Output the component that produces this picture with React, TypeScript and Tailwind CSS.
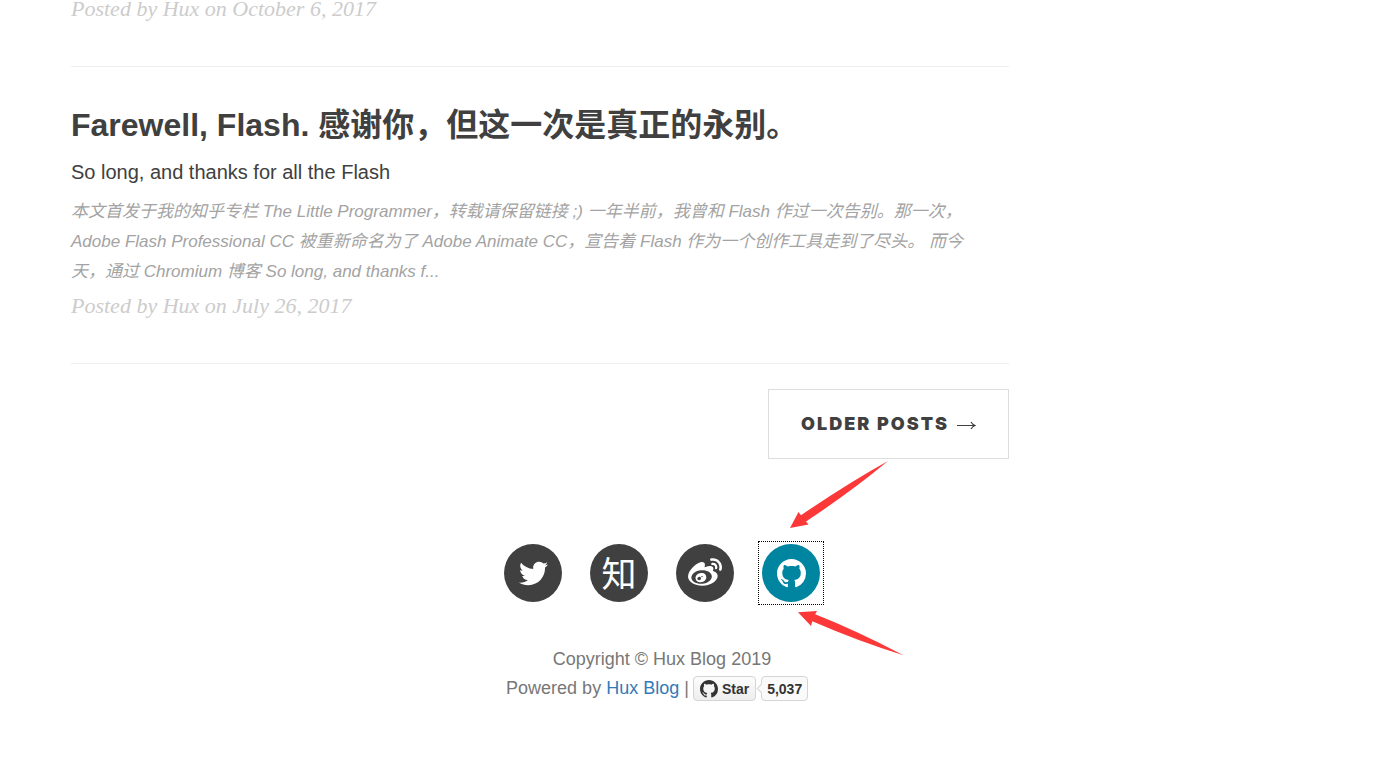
import React from "react";
import { FaTwitter, FaWeibo } from "react-icons/fa";

function GithubMark({ className }: { className: string }) {
  return (
    <svg className={className} viewBox="0 0 16 16" fill="currentColor" aria-hidden="true">
      <path d="M8 0C3.58 0 0 3.58 0 8c0 3.54 2.29 6.53 5.47 7.59.4.07.55-.17.55-.38 0-.19-.01-.82-.01-1.49-2.01.37-2.53-.49-2.69-.94-.09-.23-.48-.94-.82-1.13-.28-.15-.68-.52-.01-.53.63-.01 1.08.58 1.23.82.72 1.21 1.87.87 2.33.66.07-.52.28-.87.51-1.07-1.78-.2-3.64-.89-3.64-3.95 0-.87.31-1.59.82-2.15-.08-.2-.36-1.02.08-2.12 0 0 .67-.21 2.2.82.64-.18 1.32-.27 2-.27s1.36.09 2 .27c1.53-1.04 2.2-.82 2.2-.82.44 1.1.16 1.92.08 2.12.51.56.82 1.27.82 2.15 0 3.07-1.87 3.75-3.65 3.95.29.25.54.73.54 1.48 0 1.07-.01 1.93-.01 2.2 0 .21.15.46.55.38A8.01 8.01 0 0 0 16 8c0-4.42-3.58-8-8-8z" />
    </svg>
  );
}

function PostMeta({ children }: { children: React.ReactNode }) {
  return (
    <p className="font-['Liberation_Serif','Noto_Sans_CJK_SC',serif] text-[22px] leading-8 text-[#cccccc] italic">
      {children}
    </p>
  );
}

function SocialLink({
  label,
  active = false,
  children,
}: {
  label: string;
  active?: boolean;
  children: React.ReactNode;
}) {
  return (
    <li>
      <a
        href="#"
        aria-label={label}
        className={
          active
            ? "block border border-dotted border-black px-[3px] py-[2px]"
            : "block border border-transparent px-[3px] py-[2px]"
        }
      >
        <span
          className={
            active
              ? "flex size-[58px] items-center justify-center rounded-full bg-[#0085a1] text-white"
              : "flex size-[58px] items-center justify-center rounded-full bg-[#404040] text-white"
          }
        >
          {children}
        </span>
      </a>
    </li>
  );
}

function StarButton() {
  return (
    <span className="flex w-[125px] items-center text-sm font-bold text-[#333333]">
      <a
        href="#"
        className="flex h-[25px] items-center gap-1 rounded-[4px] border border-[#d5d5d5] bg-linear-to-b from-[#fcfcfc] to-[#eeeeee] px-[6px]"
      >
        <GithubMark className="size-[18px]" />
        Star
      </a>
      <a
        href="#"
        className="relative ml-[5px] flex h-[25px] items-center rounded-[4px] border border-[#d5d5d5] bg-[#fafafa] px-[5px]"
      >
        <span className="absolute top-[8px] -left-[4px] size-[7px] rotate-45 border-b border-l border-[#d5d5d5] bg-[#fafafa]" />
        5,037
      </a>
    </span>
  );
}

function Annotations() {
  return (
    <svg
      className="pointer-events-none absolute top-[456px] left-[784px]"
      width="124"
      height="204"
      viewBox="784 456 124 204"
      fill="#fc3838"
      aria-hidden="true"
    >
      <path d="M790 528 798.5 512 801 515.2 Q850 482 888 461 Q852 491 806 521.5 L808.5 524.5Z" />
      <path d="M798 612.3 817 611 815.2 614.3 Q855 630 903.5 655.2 Q860 642 812.3 621.3 L811 626Z" />
    </svg>
  );
}

export default function App() {
  return (
    <div className="relative overflow-x-hidden bg-white font-['Liberation_Sans','Noto_Sans_CJK_SC',sans-serif] text-[#404040]">
      <main className="-mt-[7px] ml-[71px] max-w-[938px]">
        <article className="border-b border-[#eeeeee] pb-[41px]">
          <PostMeta>Posted by Hux on October 6, 2017</PostMeta>
        </article>

        <article className="border-b border-[#eeeeee] pt-10 pb-[41px]">
          <a href="#" className="mb-[3px] block">
            <h2 className="text-[32px] leading-9 font-bold">
              Farewell, Flash. 感谢你，但这一次是真正的永别。
            </h2>
            <h3 className="mt-[18px] text-xl leading-[22px]">
              So long, and thanks for all the Flash
            </h3>
            <p className="mt-[14px] text-[17px] leading-[30px] text-[#a3a3a3] italic">
              本文首发于我的知乎专栏 The Little Programmer，转载请保留链接 ;)
              一年半前，我曾和 Flash 作过一次告别。那一次，
              <br />
              Adobe Flash Professional CC 被重新命名为了 Adobe Animate
              CC，宣告着 Flash 作为一个创作工具走到了尽头。 而今
              <br />
              天，通过 Chromium 博客 So long, and thanks f...
            </p>
          </a>
          <PostMeta>Posted by Hux on July 26, 2017</PostMeta>
        </article>

        <nav className="mt-[25px] flex justify-end">
          <a
            href="#"
            className="flex h-[70px] items-center gap-2 border border-[#dddddd] px-8 font-['Inter','Liberation_Sans',sans-serif] text-lg font-black tracking-[2px]"
          >
            OLDER POSTS
            <svg width="19" height="12" viewBox="0 0 19 12" fill="none" stroke="currentColor" strokeWidth="1.2" aria-hidden="true">
              <path d="M0 7.500H18M14 4Q15.500 6.500 18 7.500Q15.500 8.500 14 11" />
            </svg>
          </a>
        </nav>
      </main>

      <footer className="mt-[82px] pr-[69px] pb-16 text-lg text-[#777777]">
        <ul className="flex justify-center gap-5">
          <SocialLink label="Twitter">
            <FaTwitter size={29} />
          </SocialLink>
          <SocialLink label="Zhihu">
            <span className="pb-1 font-['Noto_Sans_CJK_SC',sans-serif] text-[35px] leading-none">
              知
            </span>
          </SocialLink>
          <SocialLink label="Weibo">
            <FaWeibo size={34} />
          </SocialLink>
          <SocialLink label="GitHub" active>
            <GithubMark className="size-[29px]" />
          </SocialLink>
        </ul>
        <div className="mt-10 text-center leading-[29px]">
          <p>Copyright © Hux Blog 2019</p>
          <div className="flex items-center justify-center gap-1">
            <p>
              Powered by{" "}
              <a href="#" className="text-[#337ab7]">
                Hux Blog
              </a>{" "}
              |
            </p>
            <StarButton />
          </div>
        </div>
      </footer>

      <Annotations />
    </div>
  );
}
